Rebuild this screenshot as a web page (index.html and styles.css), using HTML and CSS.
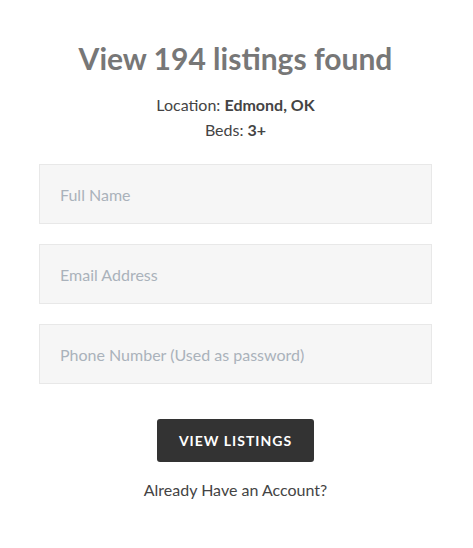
FILE: index.html
```html
<!DOCTYPE html>
<html>
<head>
<meta charset="utf-8">
<link rel="stylesheet" href="styles.css">
</head>
<body>
<div class="card">
  <h1 class="title">View 194 listings found</h1>
  <p class="meta">Location: <strong>Edmond, OK</strong></p>
  <p class="meta">Beds: <strong>3+</strong></p>
  <form class="form">
    <input class="field" type="text" placeholder="Full Name">
    <input class="field" type="text" placeholder="Email Address">
    <input class="field" type="text" placeholder="Phone Number (Used as password)">
    <button class="btn" type="button">VIEW LISTINGS</button>
  </form>
  <p class="account">Already Have an Account?</p>
</div>
</body>
</html>
```

FILE: styles.css
```css
* { box-sizing: border-box; }
html, body { margin: 0; padding: 0; background: #fff; }
body { font-family: Lato, "Open Sans", sans-serif; color: #444; }
.card {
  padding: 38px 41px 0 39px;
  display: flex;
  flex-direction: column;
  align-items: center;
}
.title {
  margin: 0;
  font-size: 30px;
  font-weight: 700;
  color: #777;
  line-height: 40px;
}
.meta {
  margin: 0;
  font-size: 16px;
  line-height: 25px;
  color: #444;
}
.title + .meta { margin-top: 14px; }
.meta strong { font-weight: 700; }
.form {
  width: 100%;
  margin-top: 22px;
  display: flex;
  flex-direction: column;
  align-items: center;
  gap: 20px;
}
.field {
  width: 100%;
  height: 60px;
  border: 1px solid #e8e8e8;
  background: #f6f6f6;
  padding: 0 20px;
  font-family: Lato, sans-serif;
  font-size: 16px;
  color: #444;
  outline: none;
}
.field::placeholder { color: #aab2bb; }
.btn {
  margin-top: 15px;
  width: 157px;
  height: 43px;
  border: none;
  border-radius: 3px;
  background: #333;
  color: #fff;
  font-family: Lato, sans-serif;
  font-weight: 700;
  font-size: 14px;
  letter-spacing: 1px;
}
.account {
  margin: 18px 0 0;
  font-size: 16px;
  line-height: 20px;
  color: #444;
}
```
